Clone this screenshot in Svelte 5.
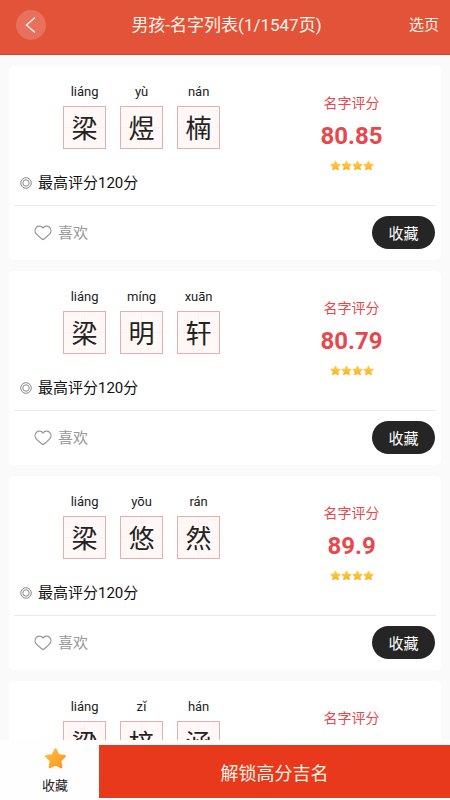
<script lang="ts">
	type Char = { pinyin: string; text: string };
	type Name = { id: number; chars: Char[]; score: string; stars: number };

	const surname: Char = { pinyin: 'liáng', text: '梁' };

	let names: Name[] = [
		{ id: 1, chars: [surname, { pinyin: 'yù', text: '煜' }, { pinyin: 'nán', text: '楠' }], score: '80.85', stars: 4 },
		{ id: 2, chars: [surname, { pinyin: 'míng', text: '明' }, { pinyin: 'xuān', text: '轩' }], score: '80.79', stars: 4 },
		{ id: 3, chars: [surname, { pinyin: 'yōu', text: '悠' }, { pinyin: 'rán', text: '然' }], score: '89.9', stars: 4 },
		{ id: 4, chars: [surname, { pinyin: 'zǐ', text: '梓' }, { pinyin: 'hán', text: '涵' }], score: '88.6', stars: 4 }
	];

	let liked: number[] = $state([]);

	function toggleLike(id: number) {
		liked = liked.includes(id) ? liked.filter((n) => n !== id) : [...liked, id];
	}
</script>

{#snippet star(fill: string)}
	<svg class="star" viewBox="0 0 24 24" aria-hidden="true">
		<path
			d="M12 2.5l3 6.1 6.7 1-4.8 4.7 1.1 6.7-6-3.1-6 3.1 1.1-6.7L2.3 9.6l6.7-1z"
			fill="url(#{fill})"
			stroke="url(#{fill})"
			stroke-width="2.4"
			stroke-linejoin="round"
		/>
	</svg>
{/snippet}

<div class="page">
	<svg class="defs" width="0" height="0" aria-hidden="true">
		<linearGradient id="gold" x1="0" y1="0" x2="0" y2="1">
			<stop offset="0" stop-color="#ffd04a" />
			<stop offset="1" stop-color="#fbb021" />
		</linearGradient>
		<linearGradient id="orange" x1="0" y1="0" x2="1" y2="1">
			<stop offset="0" stop-color="#ffc23c" />
			<stop offset="1" stop-color="#fd9025" />
		</linearGradient>
	</svg>

	<header class="top-bar">
		<button type="button" class="back-btn" aria-label="返回">
			<svg viewBox="0 0 30 30" aria-hidden="true">
				<path d="M19 7.5L10.5 15l8.5 7.5" fill="none" stroke="currentColor" stroke-width="1.4" />
			</svg>
		</button>
		<h1>男孩-名字列表(1/1547页)</h1>
		<button type="button" class="page-btn">选页</button>
	</header>

	<main class="list">
		{#each names as name (name.id)}
			<article class="card">
				<div class="summary">
					<div class="chars">
						{#each name.chars as char}
							<div class="char">
								<span class="pinyin">{char.pinyin}</span>
								<span class="tile">{char.text}</span>
							</div>
						{/each}
					</div>
					<div class="score">
						<span class="score-label">名字评分</span>
						<strong>{name.score}</strong>
						<div class="stars">
							{#each Array(name.stars) as _}
								{@render star('gold')}
							{/each}
						</div>
					</div>
				</div>
				<div class="best">
					<svg viewBox="0 0 12 12" aria-hidden="true">
						<circle cx="6" cy="6" r="5.3" />
						<circle cx="6" cy="6" r="3.2" />
					</svg>
					<span>最高评分120分</span>
				</div>
				<div class="actions">
					<button type="button" class="like-btn" class:liked={liked.includes(name.id)} onclick={() => toggleLike(name.id)}>
						<svg viewBox="0 0 18 16" aria-hidden="true">
							<path d="M9 2.9C7.3.6 4.3.5 2.5 2.2.6 4 .7 7 2.3 8.9c1.5 1.8 4.3 4 5.7 5.2.7.6 1.3.6 2 0 1.4-1.2 4.2-3.4 5.7-5.2 1.6-1.9 1.7-4.9-.2-6.700C13.7.5 10.7.6 9 2.9z" />
						</svg>
						喜欢
					</button>
					<button type="button" class="save-btn">收藏</button>
				</div>
			</article>
		{/each}
	</main>

	<footer class="bottom-bar">
		<button type="button" class="saved-btn">
			{@render star('orange')}
			收藏
		</button>
		<button type="button" class="unlock-btn">解锁高分吉名</button>
	</footer>
</div>

<style>
	:global(body) {
		background: #fafafa;
	}

	.page {
		display: flex;
		flex-direction: column;
		height: 100vh;
		font-family: Roboto, 'Noto Sans CJK SC', sans-serif;
		color: #222;
	}

	.defs {
		position: absolute;
	}

	button {
		padding: 0;
		border: none;
		background: none;
		font: inherit;
		color: inherit;
		cursor: pointer;
	}

	.top-bar {
		flex: none;
		display: grid;
		grid-template-columns: 60px 1fr 62px;
		align-items: center;
		height: 55px;
		padding: 0 11px 4px 16px;
		box-sizing: border-box;
		background: #e2533a;
		border-bottom: 1px solid #cf4436;
		color: #fff3e6;
	}

	.back-btn {
		width: 30px;
		height: 30px;
		border-radius: 50%;
		background: #e8705c;
	}

	.back-btn svg {
		display: block;
	}

	h1 {
		margin: 0;
		font-size: 17px;
		font-weight: 400;
		line-height: 24px;
		text-align: center;
	}

	.page-btn {
		justify-self: end;
		font-size: 15px;
		line-height: 24px;
	}

	.list {
		flex: 1;
		min-height: 0;
		display: flex;
		flex-direction: column;
		gap: 11px;
		padding: 11px 9px;
		overflow-y: auto;
		scrollbar-width: none;
	}

	.card {
		flex: none;
		padding: 16px 5px 11px;
		background: #fff;
		border-radius: 5px;
	}

	.summary {
		display: grid;
		grid-template-columns: 3fr 2fr;
	}

	.chars {
		display: flex;
		justify-content: center;
		gap: 14px;
		padding-left: 2px;
	}

	.char {
		display: flex;
		flex-direction: column;
		align-items: center;
		gap: 4px;
		width: 43px;
	}

	.pinyin {
		font-size: 13px;
		line-height: 20px;
	}

	.tile {
		width: 43px;
		height: 43px;
		box-sizing: border-box;
		border: 1px solid #e2b0b0;
		background:
			linear-gradient(#fdf1f0, #fdf1f0) center / 100% 1px no-repeat,
			linear-gradient(#fdf1f0, #fdf1f0) center / 1px 100% no-repeat,
			#fff8f7;
		font-size: 26px;
		line-height: 44px;
		text-align: center;
	}

	.score {
		display: flex;
		flex-direction: column;
		align-items: center;
		padding-top: 11px;
		color: #e8474c;
	}

	.score-label {
		font-size: 14px;
		line-height: 20px;
	}

	.score strong {
		margin: 7px 0 8px;
		font-size: 24px;
		font-weight: 700;
		line-height: 32px;
	}

	.stars {
		display: flex;
	}

	.stars .star {
		width: 11px;
		height: 11px;
	}

	.best {
		display: flex;
		align-items: center;
		gap: 6px;
		padding: 0 6px 10px;
		border-bottom: 1px solid #e9e9e9;
		font-size: 15px;
		line-height: 24px;
		color: #111;
	}

	.best svg {
		width: 12px;
		height: 12px;
		fill: none;
		stroke: #8a8a8a;
	}

	.actions {
		display: flex;
		justify-content: space-between;
		align-items: center;
		padding: 10px 1px 0 20px;
	}

	.like-btn {
		display: flex;
		align-items: center;
		gap: 6px;
		font-size: 15px;
		line-height: 24px;
		color: #999;
	}

	.like-btn svg {
		width: 18px;
		height: 16px;
		fill: none;
		stroke: #999;
		stroke-width: 1.3;
	}

	.like-btn.liked svg {
		fill: #e8474c;
		stroke: #e8474c;
	}

	.save-btn {
		width: 63px;
		height: 33px;
		border-radius: 17px;
		background: #252525;
		color: #fff;
		font-size: 15px;
	}

	.bottom-bar {
		flex: none;
		display: grid;
		grid-template-columns: 22% 1fr;
		height: 60px;
		background: #fefefe;
	}

	.saved-btn {
		display: flex;
		flex-direction: column;
		align-items: center;
		gap: 6px;
		padding: 7px 0 0 11px;
		font-size: 13px;
		line-height: 20px;
	}

	.saved-btn .star {
		width: 23px;
		height: 23px;
	}

	.unlock-btn {
		margin: 5px 0 2px;
		background: #e9391d;
		color: #fff3e6;
		font-size: 18px;
	}
</style>
